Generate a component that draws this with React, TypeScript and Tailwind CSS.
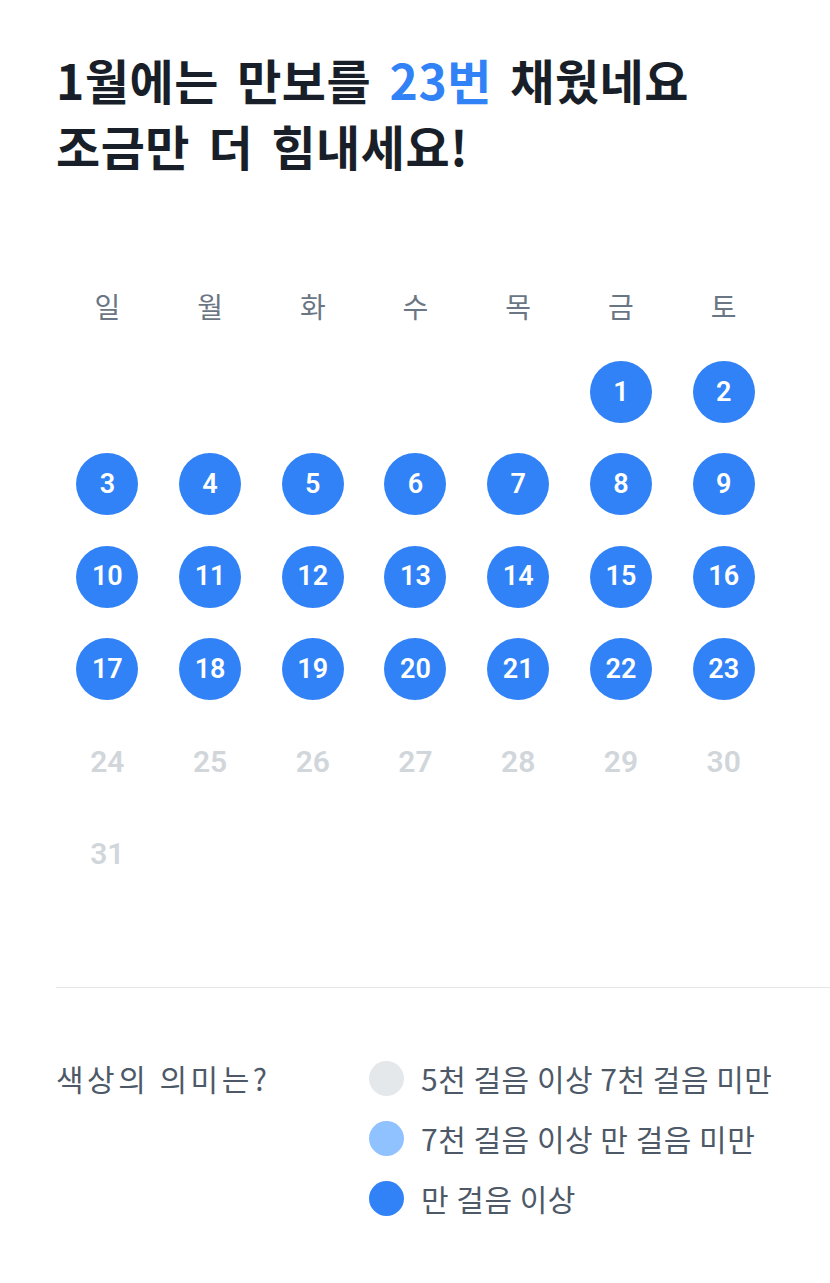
import React from 'react'

const WEEKDAYS = ['일', '월', '화', '수', '목', '금', '토']

// 1월: starts on Friday, 23 days reached 10k steps
const FIRST_OFFSET = 5
const DAYS = 31
const DONE = 23

const LEGEND = [
  { color: 'bg-[#e5e8eb]', label: '5천 걸음 이상 7천 걸음 미만' },
  { color: 'bg-[#90c2ff]', label: '7천 걸음 이상 만 걸음 미만' },
  { color: 'bg-[#3182f6]', label: '만 걸음 이상' },
]

const numFont = { fontFamily: 'Roboto, "Noto Sans", sans-serif' }

const DayCell = ({ day }: { day: number }) => {
  const done = day <= DONE
  return (
    <div className="flex h-[62px] items-center justify-center">
      {done ? (
        <div
          className="flex h-[62px] w-[62px] items-center justify-center rounded-full bg-[#3182f6] text-[27px] font-semibold text-white"
          style={numFont}
        >
          {day}
        </div>
      ) : (
        <span className="text-[30px] font-semibold text-[#d1d6db]" style={numFont}>
          {day}
        </span>
      )}
    </div>
  )
}

export default function App() {
  const cells: (number | null)[] = [
    ...Array(FIRST_OFFSET).fill(null),
    ...Array.from({ length: DAYS }, (_, i) => i + 1),
  ]

  return (
    <div
      className="min-h-screen w-full bg-white pb-10"
      style={{ fontFamily: '"Noto Sans CJK KR", "Noto Sans", sans-serif' }}
    >
      <div className="pl-[56px] pr-[55px] pt-[46px]">
        <h1 className="text-[48px] font-bold leading-[66px] tracking-[0.5px] [word-spacing:7px] text-[#191f28]">
          1월에는 만보를 <span className="text-[#3182f6]">23번</span> 채웠네요
          <br />
          조금만 더 힘내세요!
        </h1>

        <div className="mt-[108px] grid grid-cols-7">
          {WEEKDAYS.map((d) => (
            <div key={d} className="flex h-[40px] items-center justify-center text-[28px] text-[#6b7684]">
              {d}
            </div>
          ))}
        </div>

        <div className="mt-[35px] grid grid-cols-7 gap-y-[30.3px]">
          {cells.map((day, i) =>
            day === null ? <div key={`e${i}`} className="h-[62px]" /> : <DayCell key={day} day={day} />
          )}
        </div>
      </div>

      <div className="ml-[56px] mt-[103px] h-px bg-[#e5e8eb]" />

      <div className="mt-[73px] flex pl-[56px]">
        <div className="flex h-[35px] w-[313px] items-center text-[30px] tracking-[3.5px] text-[#4e5968]">
          색상의 의미는?
        </div>
        <div className="flex flex-col gap-[25px]">
          {LEGEND.map((item) => (
            <div key={item.label} className="flex h-[35px] items-center gap-[17px]">
              <div className={`h-[35px] w-[35px] shrink-0 rounded-full ${item.color}`} />
              <span className="whitespace-nowrap text-[30px] tracking-[0.5px] text-[#4e5968]">{item.label}</span>
            </div>
          ))}
        </div>
      </div>
    </div>
  )
}
